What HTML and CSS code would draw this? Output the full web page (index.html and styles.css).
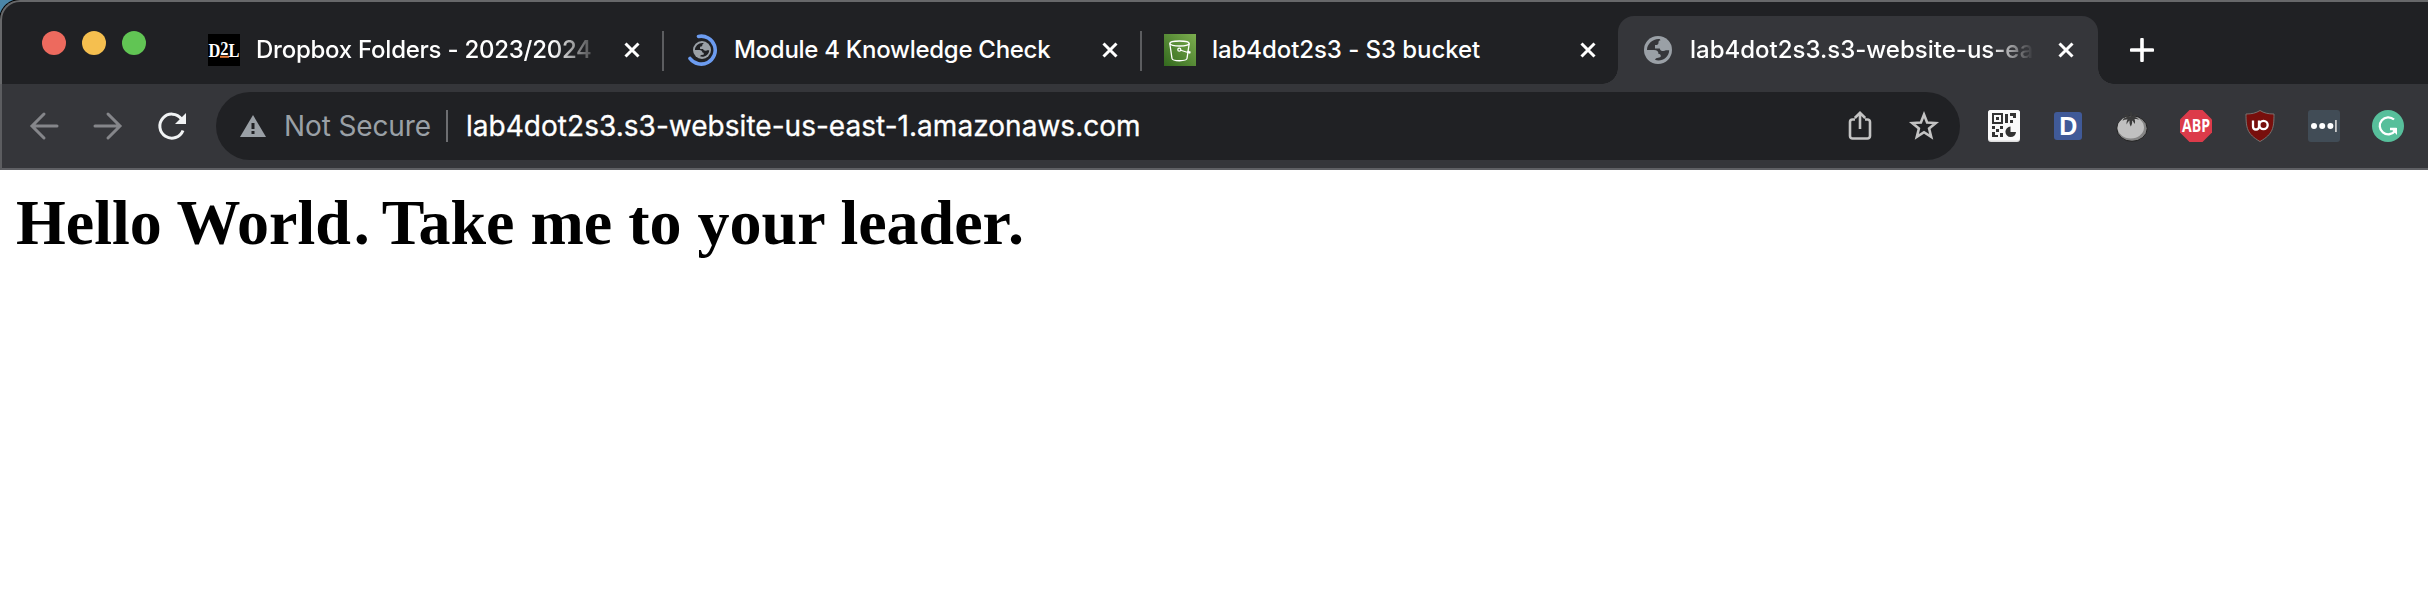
FILE: index.html
```html
<!DOCTYPE html>
<html lang="en">
<head>
<meta charset="utf-8">
<title>lab4dot2s3</title>
<link rel="stylesheet" href="styles.css">
</head>
<body>
<div class="window">
  <header class="tabstrip">
    <div class="lights"><i class="red"></i><i class="yellow"></i><i class="green"></i></div>
    <div class="tab">
      <svg class="favicon" viewBox="0 0 32 32"><rect width="32" height="32"/><path d="M12 21.800h9v2h-9z" fill="#e87a35"/><text class="d2l" x=".5" y="22.500" textLength="31" lengthAdjust="spacingAndGlyphs">D<tspan dy="-2">2</tspan><tspan dy="2">L</tspan></text></svg>
      <span class="title t1">Dropbox Folders - 2023/2024</span>
      <svg class="close" viewBox="0 0 16 16"><path d="M1.5 1.5l13 13M14.5 1.5l-13 13"/></svg>
    </div>
    <div class="tab">
      <svg class="favicon" viewBox="0 0 32 32"><path d="M12.500 2.400A14 14 0 1 1 4 24.500" fill="none" stroke="#6c9cf0" stroke-width="3.600" stroke-linecap="round"/><g transform="translate(7 7) scale(.643)"><circle cx="14" cy="14" r="14" fill="#9aa0a6"/><path class="land" d="M14.500 3C8.500 3 3 8 3 14h7c3 0 4.500 1.500 4.500 4 1.500 0 2.300.6 2.300 2.200 0 2-5 .6-5.800 3.600C17 26 25 22 25.200 14.200h-3.400c-2 1.600-6 .6-6-1.800H11V9c3 0 3.500-1.200 3.500-2.600 0-1.200.6-1.800 1.800-1.800 0-1 0-1.600-1.800-1.600z"/></g></svg>
      <span class="title t2">Module 4 Knowledge Check</span>
      <svg class="close" viewBox="0 0 16 16"><path d="M1.5 1.5l13 13M14.5 1.5l-13 13"/></svg>
    </div>
    <div class="tab last">
      <svg class="favicon" viewBox="0 0 32 32"><defs><linearGradient id="leaf" x1="0" y1="1" x2="1" y2="0"><stop stop-color="#33691e"/><stop offset="1" stop-color="#7cae4f"/></linearGradient></defs><rect width="32" height="32" fill="url(#leaf)"/><g fill="none" stroke="#fff" stroke-width="1.300"><ellipse cx="15.500" cy="9.500" rx="9.700" ry="2.500"/><path d="M5.800 9.500L8 24.500c.5 3 14.500 3 15 0l2.200-15M16 16l9.500 3"/><circle cx="15.300" cy="15.700" r="1.500"/><path d="M23.500 17.500l3 1.200" stroke-width="2"/></g></svg>
      <span class="title t3">lab4dot2s3 - S3 bucket</span>
      <svg class="close" viewBox="0 0 16 16"><path d="M1.5 1.5l13 13M14.5 1.5l-13 13"/></svg>
    </div>
    <div class="tab active">
      <svg class="favicon" viewBox="0 0 32 32"><g transform="translate(2 2)"><circle cx="14" cy="14" r="14" fill="#9aa0a6"/><path class="land lit" d="M14.500 3C8.500 3 3 8 3 14h7c3 0 4.500 1.500 4.500 4 1.500 0 2.300.6 2.300 2.200 0 2-5 .6-5.800 3.600C17 26 25 22 25.200 14.200h-3.400c-2 1.600-6 .6-6-1.800H11V9c3 0 3.500-1.200 3.500-2.600 0-1.200.6-1.800 1.800-1.800 0-1 0-1.600-1.800-1.600z"/></g></svg>
      <span class="title t4">lab4dot2s3.s3-website-us-eas</span>
      <svg class="close" viewBox="0 0 16 16"><path d="M1.5 1.5l13 13M14.5 1.5l-13 13"/></svg>
    </div>
    <svg class="plus" viewBox="0 0 24 24"><path d="M12 1.500v21M1.500 12h21"/></svg>
  </header>
  <nav class="toolbar">
    <div class="navs">
      <svg class="nav dim" viewBox="0 0 32 32"><path d="M29 16H4.500M16 4L4 16l12 12"/></svg>
      <svg class="nav dim" viewBox="0 0 32 32"><path d="M3 16h24.500M16 4l12 12-12 12"/></svg>
      <svg class="nav" viewBox="0 0 32 32"><path d="M25.500 9A12 12 0 1 0 27 20.500"/><path class="tip" d="M30 3v11H19z"/></svg>
    </div>
    <div class="omnibox">
      <svg class="warn" viewBox="0 0 26 22"><path d="M13 0l13 22H0z" fill="#9aa0a6"/><path d="M11.500 8h3v6h-3zM11.500 16h3v3h-3z" fill="#202124"/></svg>
      <span class="secure">Not Secure</span>
      <i class="rule"></i>
      <span class="url">lab4dot2s3.s3-website-us-east-1.amazonaws.com</span>
      <svg class="action share" viewBox="0 0 32 32"><path d="M11 9.500H8.500a2.500 2.500 0 0 0-2.500 2.500v14a2.500 2.500 0 0 0 2.500 2.500h15a2.500 2.500 0 0 0 2.500-2.500V12a2.500 2.500 0 0 0-2.500-2.500H21M16 19V3.500M10.800 8L16 2.800 21.200 8"/></svg>
      <svg class="action" viewBox="0 0 32 32"><path d="M16 4.500l3.100 8 8.600.5-6.600 5.500 2.100 8.400-7.200-4.700-7.200 4.700 2.100-8.400L4.300 13l8.600-.5z"/></svg>
    </div>
    <div class="extensions">
      <svg viewBox="0 0 32 32"><rect width="32" height="32" rx="3" fill="#ddd"/><rect width="32" height="30.500" rx="3" fill="#fafafa"/><g fill="#333"><path d="M4 3h11v11H4zM6 5v7h7V5z" fill-rule="evenodd"/><path d="M8 7h3v3H8zM17 4h3v9h-3zM22 3h6v5h-3V6h-3zM22 10h3v3h-3zM4 16h3v3H4zM8 19h3v3H8zM12 16h3v3h-3zM4 22h3v3h3v2H4zM12 23h3v4h-3z"/><path d="M22.500 16.500A5.300 5.300 0 1 0 28 22h-5.500z"/></g></svg>
      <svg viewBox="0 0 32 32"><rect x="2" y="2" width="28" height="28" rx="3" fill="#405a98"/><text class="letter" x="16.300" y="25">D</text></svg>
      <svg viewBox="0 0 32 32"><ellipse cx="16" cy="18.500" rx="15.200" ry="12.800" fill="#858585" stroke="#222"/><ellipse cx="14.800" cy="17.500" rx="13.200" ry="11" fill="#c0c0c0"/><path d="M14.500 7C13.500 5 13.500 3 15 1c1.500 2 1 4 1.500 5 2-2 4-2.500 6-2-2 .8-3 2-3.500 3 2 .5 3 1.500 4 3-2-1-3-1-4.500-.8.800 1.500.8 3 0 4.800-.8-1.800-1.500-2.800-2.500-3.500.4 2 0 4-1.200 6-1.200-2-1.500-4-1.200-6-1.200.8-2.400 2.200-2.800 4-.6-2 0-4 .8-5-2-.2-3.600.2-5 1.200C7 9 8.500 7.500 10.500 7.500 9.500 6 8.500 5.500 7 5c3-.8 5.500 0 7.500 2z" fill="#3a3a3a"/></svg>
      <svg viewBox="0 0 32 32"><path d="M9.500 0h13L32 9.500v13L22.500 32h-13L0 22.500v-13z" fill="#dc3b4a"/><text class="abp" x="2" y="22" textLength="28" lengthAdjust="spacingAndGlyphs">ABP</text></svg>
      <svg viewBox="0 0 32 32"><path d="M16 .5c4 2.500 8 3.500 14 3.500 0 14-1 20-14 27.500C3 24 2 18 2 4c6 0 10-1 14-3.500z" fill="#780f0c" stroke="#77716f"/><path d="M9 10.500v6c0 4 6 4 6 0v-6" class="ubo"/><circle cx="19.500" cy="15" r="4.200" class="ubo"/></svg>
      <svg viewBox="0 0 32 32"><rect width="32" height="32" rx="3" fill="#414c56"/><g fill="#fff"><circle cx="6" cy="16" r="3"/><circle cx="14.200" cy="16" r="3"/><circle cx="22.400" cy="16" r="3"/></g><path d="M27 10h1.800v12H27z" fill="#ccc"/></svg>
      <svg viewBox="0 0 32 32"><circle cx="16" cy="16" r="16" fill="#57bf9b"/><path d="M22 9.500A8.500 8.500 0 1 0 23 21M24.500 19H18" fill="none" stroke="#fff" stroke-width="2.300"/><path d="M18.500 18H25v7z" fill="#fff"/></svg>
    </div>
  </nav>
</div>
<main class="page"><h1>Hello World<span class="stop">.</span> Take me to your leader<span class="stop end">.</span></h1></main>
</body>
</html>
```

FILE: styles.css
```css
* { box-sizing: border-box; }
body { margin: 0; background: #fff; font-family: Inter, "Liberation Sans", sans-serif; }
svg { display: block; flex: none; }
.window { height: 170px; background: radial-gradient(circle at 20px 20px, #000 20.5px, #4b86a8 21.5px); }
.tabstrip { display: flex; height: 84px; padding-left: 40px; background: #202124; border: solid #67686a; border-width: 2px 0 0 2px; border-top-left-radius: 20px; }
.lights { display: flex; gap: 16px; width: 142px; padding-top: 29px; }
.lights i { width: 24px; height: 24px; border-radius: 50%; }
.red { background: #ed6a5e; }
.yellow { background: #f5bf4f; }
.green { background: #61c554; }
.tab { position: relative; display: flex; align-items: center; width: 478px; height: 68px; margin-top: 14px; padding-left: 24px; }
.tab:not(.active):not(.last)::after { content: ""; position: absolute; right: -2px; top: 15px; width: 2px; height: 40px; background: #5c5d60; }
.active { width: 480px; background: #35363a; border-radius: 16px 16px 0 0; }
.active::before, .active::after { content: ""; position: absolute; bottom: 0; width: 16px; height: 16px; }
.active::before { left: -16px; background: radial-gradient(circle at 0 0, #202124 15.5px, #35363a 16px); }
.active::after { right: -16px; background: radial-gradient(circle at 100% 0, #202124 15.5px, #35363a 16px); }
.favicon { width: 32px; height: 32px; }
.d2l { font: bold 18px "Liberation Serif", serif; fill: #fff; }
.land { fill: #202124; }
.lit { fill: #35363a; }
.title { width: 344px; margin: 0 24px 0 16px; overflow: hidden; white-space: nowrap; color: #fff; font-size: 24px; line-height: 32px; font-weight: 500; }
.t1 { letter-spacing: -.25px; -webkit-mask-image: linear-gradient(90deg, #000 296px, transparent 346px); mask-image: linear-gradient(90deg, #000 296px, transparent 346px); }
.t2 { letter-spacing: -.28px; }
.t3 { letter-spacing: -.07px; }
.t4 { -webkit-mask-image: linear-gradient(90deg, #000 300px, transparent 344px); mask-image: linear-gradient(90deg, #000 300px, transparent 344px); }
.close { width: 16px; height: 16px; fill: none; stroke: #fff; stroke-width: 3; }
.plus { width: 24px; height: 24px; margin: 36px 0 0 32px; stroke: #fff; stroke-width: 3.6; stroke-linecap: round; }
.toolbar { display: flex; align-items: center; height: 86px; padding-left: 26px; background: #35363a; border-left: 2px solid #5c5d60; border-bottom: 2px solid #5f6064; }
.navs { display: flex; gap: 32px; width: 188px; }
.nav { width: 32px; height: 32px; fill: none; stroke: #f1f3f4; stroke-width: 3; }
.nav .tip { fill: #f1f3f4; stroke: none; }
.dim { stroke: #85868a; stroke-linecap: round; }
.omnibox { display: flex; align-items: center; width: 1744px; height: 68px; padding: 0 20px 0 24px; background: #202124; border-radius: 34px; font-size: 28px; line-height: 40px; white-space: nowrap; }
.warn { width: 26px; height: 22px; }
.secure { width: 162px; margin-left: 18px; color: #9aa0a6; letter-spacing: -.12px; }
.rule { width: 2px; height: 32px; background: #6d6e71; }
.url { flex: 1; margin-left: 18px; color: #fff; letter-spacing: .03px; -webkit-text-stroke: .3px #fff; }
.action { width: 32px; height: 32px; fill: none; stroke: #c4c4c4; stroke-width: 2.6; }
.share { margin-right: 32px; }
.extensions { display: flex; gap: 32px; margin-left: 28px; }
.extensions svg { width: 32px; height: 32px; }
.letter { font: bold 25px "Liberation Sans", sans-serif; fill: #fff; text-anchor: middle; }
.abp { font: bold 17px "Open Sans", sans-serif; fill: #fff; }
.ubo { fill: none; stroke: #fff; stroke-width: 2.3; }
.page { padding: 16px; }
h1 { margin: 0; font: bold 64px/74px "Liberation Serif", serif; color: #000; }
.stop { margin: 0 -3px 0 3px; }
.stop.end { margin: 0 0 0 -3px; }
```
